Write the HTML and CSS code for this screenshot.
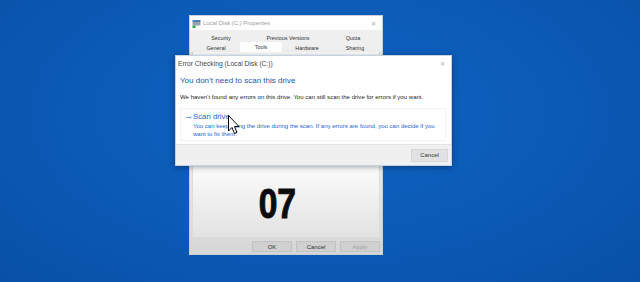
FILE: index.html
```html
<!DOCTYPE html>
<html lang="en">

<head>
  <meta charset="UTF-8">
  <meta name="viewport" content="width=device-width, initial-scale=1.0">
  <title>Error Checking</title>
  <link rel="stylesheet" href="styles.css">
</head>

<body>
  <div class="desktop">
    <div class="window props">
      <div class="titlebar">
        <svg class="drive-icon" width="9" height="9" viewBox="0 0 9 9">
          <rect x="0.5" y="1" width="8" height="2" fill="#4a7fb8" />
          <rect x="0.5" y="3" width="8" height="3.5" fill="#9aa3ad" />
          <rect x="0.5" y="6.5" width="3" height="2.5" fill="#2fa84f" />
        </svg>
        <span class="title">Local Disk (C:) Properties</span>
        <span class="close">✕</span>
      </div>

      <div class="tabs">
        <div class="tab-row">
          <span class="tab tab-security">Security</span>
          <span class="tab tab-versions">Previous Versions</span>
          <span class="tab tab-quota">Quota</span>
        </div>
        <div class="tab-row">
          <span class="tab tab-general">General</span>
          <span class="tab tab-tools active">Tools</span>
          <span class="tab tab-hardware">Hardware</span>
          <span class="tab tab-sharing">Sharing</span>
        </div>
      </div>

      <div class="panel">
        <div class="count"><span class="count-digits">07</span></div>
      </div>

      <div class="actions">
        <button class="btn">OK</button>
        <button class="btn">Cancel</button>
        <button class="btn disabled">Apply</button>
      </div>
    </div>

    <div class="window dialog">
      <div class="titlebar">
        <span class="title">Error Checking (Local Disk (C:))</span>
        <span class="close">✕</span>
      </div>

      <div class="dialog-body">
        <h1 class="heading">You don’t need to scan this drive</h1>
        <p class="message">We haven’t found any errors on this drive. You can still scan the drive for errors if you want.</p>

        <div class="command-link">
          <div class="command-title"><span class="arrow">→</span>Scan drive</div>
          <div class="command-desc">You can keep using the drive during the scan. If any errors are found, you can decide if you want to fix them.</div>
        </div>
      </div>

      <div class="dialog-footer">
        <button class="btn footer-btn">Cancel</button>
      </div>
    </div>

    <!-- mouse pointer sitting over the command link -->
    <svg class="cursor" width="12" height="20" viewBox="0 0 12 20">
      <path d="M0.5 0.5 L0.5 16 L4 12.5 L6.5 18.5 L9 17.5 L6.5 11.5 L11 11.5 Z" fill="#fff" stroke="#000" stroke-width="1" stroke-linejoin="round" />
    </svg>
  </div>
</body>

</html>
```

FILE: styles.css
```css
body {
  margin: 0;
  font-family: "Liberation Sans", Arial, sans-serif;
  color: #222;
}

.desktop {
  position: relative;
  width: 640px;
  height: 282px;
  overflow: hidden;
  background: radial-gradient(ellipse at 50% 40%, #0f62c0 0%, #0b5ab6 55%, #0950a8 100%);
}

.window {
  position: absolute;
  box-sizing: border-box;
}

button {
  font-family: inherit;
}

/* ---------- properties window ---------- */

.props {
  left: 189px;
  top: 15px;
  width: 194px;
  height: 240px;
  display: flex;
  flex-direction: column;
  border: 1px solid #c9cfd6;
  background: linear-gradient(#f0f0f0 0%, #ececec 60%, #d6d6d6 100%);
}

.titlebar {
  height: 14px;
  display: flex;
  align-items: center;
  background-color: #fff;
}

.props .titlebar {
  padding: 0 6px 0 2px;
}

.drive-icon {
  margin-right: 2px;
}

.title {
  flex: 1;
  font-size: 5.9px;
  color: #9a9a9a;
  white-space: nowrap;
}

.close {
  font-size: 6px;
  color: #a8a8a8;
}

.tabs {
  padding: 3px 2px 0 3px;
}

.tab-row {
  display: flex;
  height: 10px;
  align-items: center;
}

.tab-row + .tab-row {
  height: 9px;
}

.tab {
  text-align: center;
  font-size: 5.4px;
  color: #333;
  white-space: nowrap;
}

.tab-security { width: 56px; }
.tab-versions { width: 78px; }
.tab-quota { width: 52px; }
.tab-general { width: 46px; }
.tab-tools { width: 42px; margin-left: 1px; }
.tab-hardware { width: 50px; }
.tab-sharing { width: 46px; }

.tab.active {
  align-self: stretch;
  margin-top: -1px;
  padding-top: 1px;
  line-height: 8px;
  background-color: #fff;
}

.panel {
  flex: 1;
  margin: 0 2px;
  border-left: 1px solid #dcdcdc;
  border-right: 1px solid #dcdcdc;
  background: linear-gradient(#fff 0%, #fbfbfb 62%, #e2e2e2 100%);
}

.count {
  padding: 131px 18px 0 0;
  text-align: center;
  font-weight: 700;
  font-size: 42px;
  line-height: 1;
  color: #0c0c0c;
}

.count-digits {
  display: inline-block;
  transform: scaleX(0.8);
  -webkit-text-stroke: 1px #0c0c0c;
}

.actions {
  height: 17px;
  display: flex;
  justify-content: flex-end;
  gap: 4px;
  padding: 4px 2px 0 0;
  box-sizing: border-box;
}

.btn {
  height: 11px;
  width: 40px;
  padding: 0;
  border: 1px solid #c4c4c4;
  background-color: #d0d0d0;
  font-size: 6px;
  color: #333;
}

.btn.disabled {
  color: #a2a2a2;
}

/* ---------- error checking dialog ---------- */

.dialog {
  left: 175px;
  top: 55px;
  width: 277px;
  height: 111px;
  display: flex;
  flex-direction: column;
  border: 1px solid #c4d2e4;
  background-color: #fff;
  box-shadow: 0 1px 6px rgba(0, 0, 0, 0.35);
}

.dialog .titlebar {
  padding: 0 6px 0 2px;
}

.dialog .title {
  color: #444;
  font-size: 6.7px;
}

.dialog-body {
  flex: 1;
  padding: 0 5px 0 4px;
}

.heading {
  margin: 5px 0 0;
  font-size: 8px;
  line-height: 12px;
  font-weight: 400;
  color: #2357a8;
}

.message {
  margin: 6px 0 0;
  font-size: 6.05px;
  line-height: 8px;
  color: #1e1e1e;
}

.command-link {
  margin-top: 7px;
  padding: 2px 6px 2px 3px;
  border: 1px solid #f1f3f6;
}

.command-title {
  font-size: 7.8px;
  line-height: 10px;
  color: #2a62c8;
}

.arrow {
  display: inline-block;
  width: 9px;
  font-size: 9px;
}

.command-desc {
  margin-left: 9px;
  font-size: 6px;
  line-height: 8px;
  color: #2463cf;
}

.dialog-footer {
  height: 20px;
  display: flex;
  align-items: center;
  justify-content: flex-end;
  padding-right: 3px;
  border-top: 1px solid #e4e4e4;
  background-color: #f0f0f0;
}

.footer-btn {
  width: 37px;
  height: 13px;
  border-color: #d6d6d6;
  background-color: #e2e2e2;
  color: #333;
}

.cursor {
  position: absolute;
  left: 228px;
  top: 115px;
}
```
